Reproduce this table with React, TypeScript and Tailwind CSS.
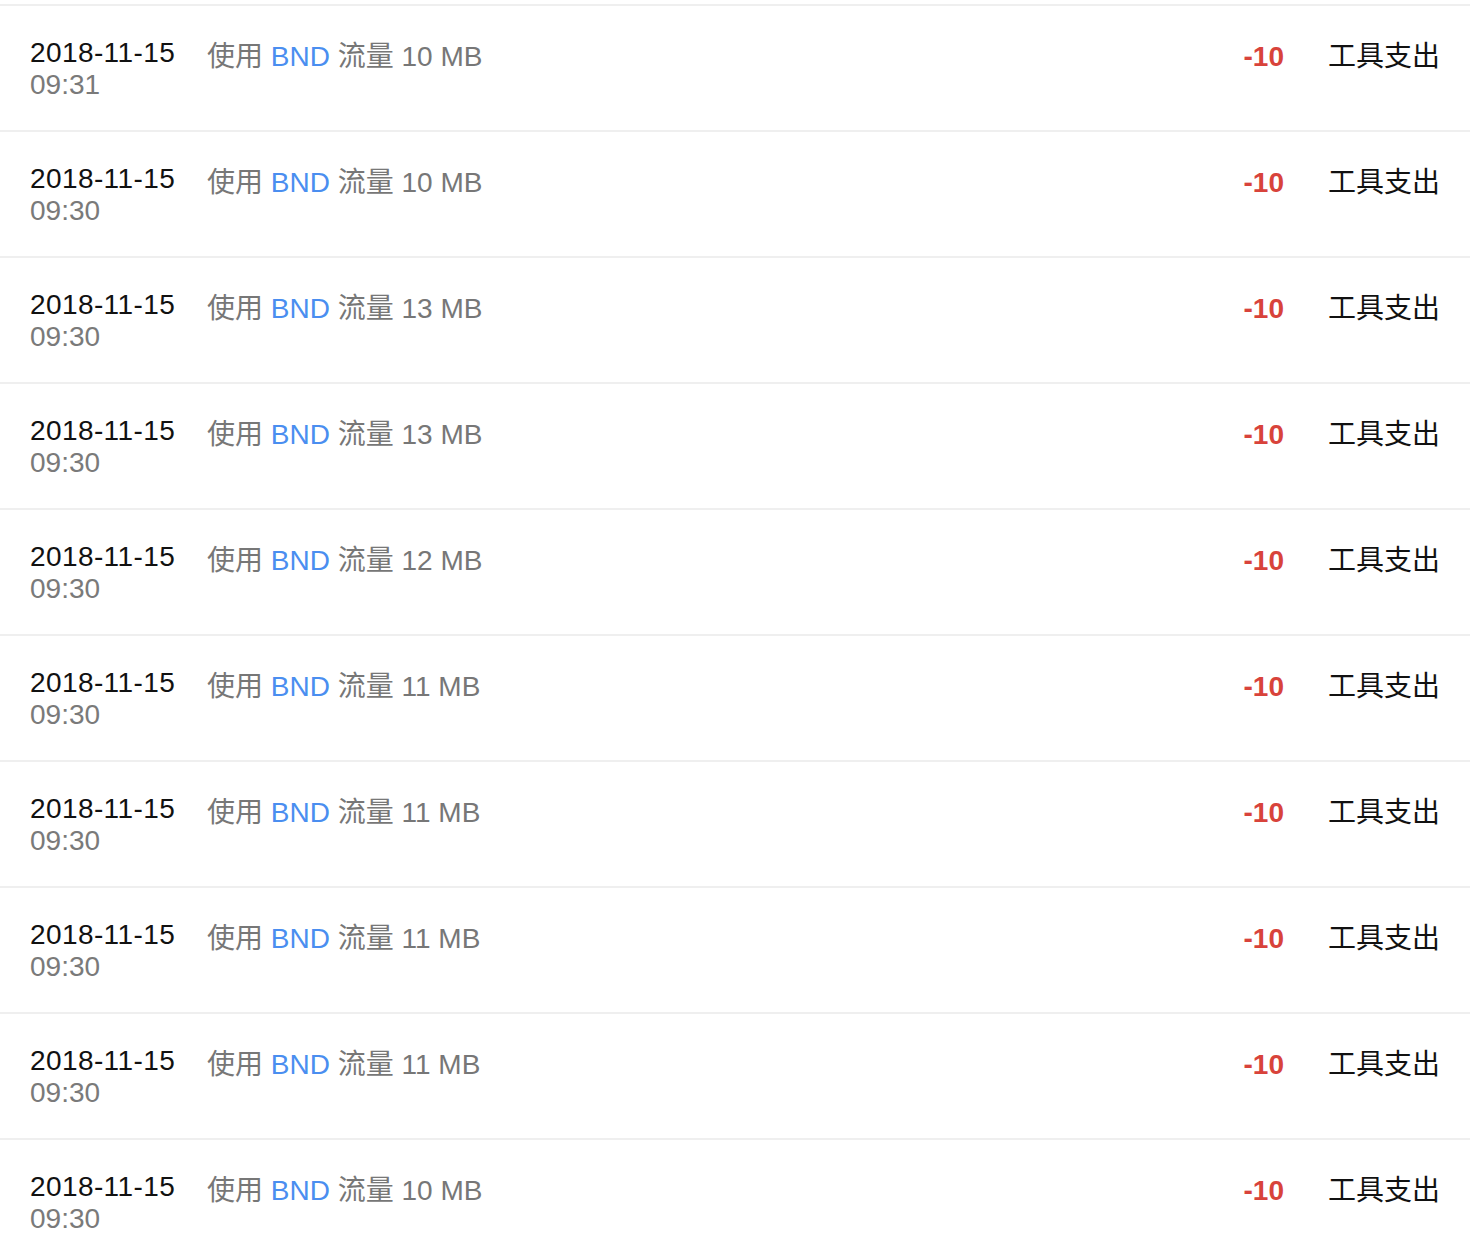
const RECORDS = [
  { date: "2018-11-15", time: "09:31", mb: 10 },
  { date: "2018-11-15", time: "09:30", mb: 10 },
  { date: "2018-11-15", time: "09:30", mb: 13 },
  { date: "2018-11-15", time: "09:30", mb: 13 },
  { date: "2018-11-15", time: "09:30", mb: 12 },
  { date: "2018-11-15", time: "09:30", mb: 11 },
  { date: "2018-11-15", time: "09:30", mb: 11 },
  { date: "2018-11-15", time: "09:30", mb: 11 },
  { date: "2018-11-15", time: "09:30", mb: 11 },
  { date: "2018-11-15", time: "09:30", mb: 10 },
];

export default function App() {
  return (
    <div
      className="min-h-screen bg-white text-[28px] leading-[32px]"
      style={{ fontFamily: '"Liberation Sans", "Noto Sans CJK SC", sans-serif' }}
    >
      <div className="h-[6px] border-b-2 border-[#efefef]" />
      {RECORDS.map((r, i) => (
        <div key={i} className="flex h-[126px] border-b-2 border-[#efefef] pl-[30px] pr-[30px]">
          {/* date + time */}
          <div className="w-[177px] shrink-0 pt-[31px]">
            <div className="tracking-[0.4px] text-[#111]">{r.date}</div>
            <div className="text-[#7a7a7a]">{r.time}</div>
          </div>

          {/* description */}
          <div className="pt-[35px] text-[#777]">
            使用 <span className="text-[#4a8ef0]">BND</span> 流量 {r.mb} MB
          </div>

          {/* amount + type */}
          <div className="ml-auto flex items-baseline gap-[44px] pt-[35px]">
            <span className="font-bold text-[#d8433b]">-10</span>
            <span className="text-[#111]">工具支出</span>
          </div>
        </div>
      ))}
    </div>
  );
}
